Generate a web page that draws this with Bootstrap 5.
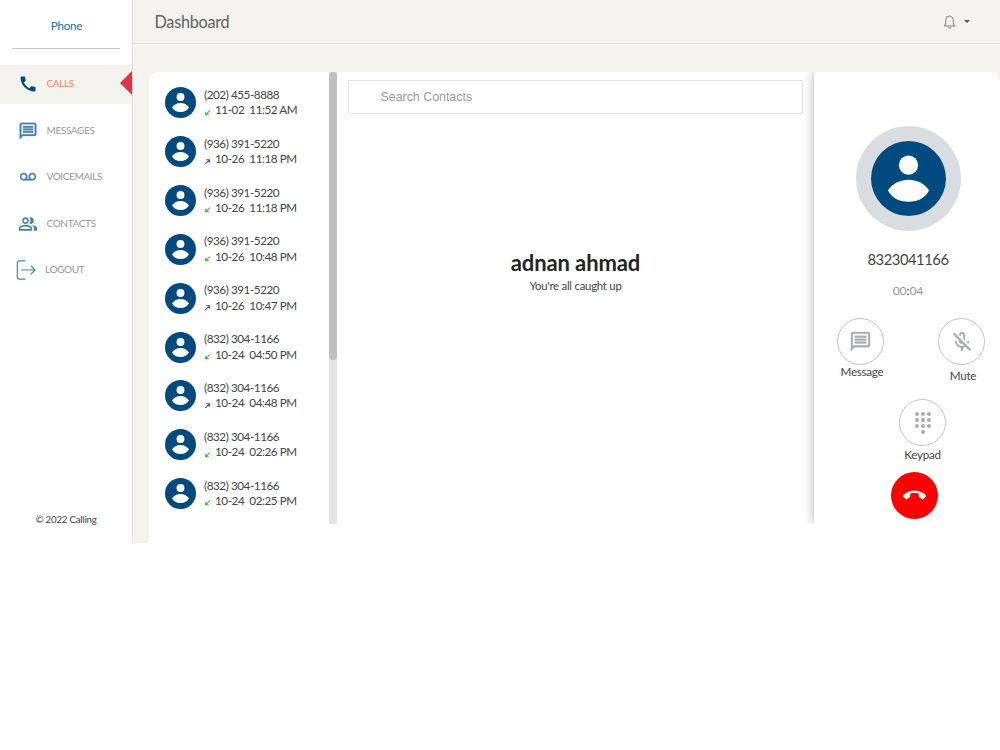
<!DOCTYPE html>
<html lang="en">
<head>
<meta charset="utf-8">
<meta name="viewport" content="width=device-width, initial-scale=1">
<title>Dashboard</title>
<link href="https://cdn.jsdelivr.net/npm/bootstrap@5.3.0/dist/css/bootstrap.min.css" rel="stylesheet">
<style>
body{font-family:Lato,sans-serif;font-size:11.7px;line-height:16px;letter-spacing:-.3px;color:#444;background:#fff}
svg{display:block;flex:none;fill:currentColor}
.app{height:543px}
.side{width:133px;border-right:1px solid #dfdeda;background:#fff}
.brand{height:49px;margin:0 12px 16px;border-bottom:1px solid #ccc9c2;color:#2f6d9f;padding:17px 0 0 1px}
.side-link{height:38.5px;margin-bottom:8px;color:#9a9a9a;font-size:10.1px;letter-spacing:-.42px;padding-left:17.5px;text-decoration:none}
.side-link .word{padding-bottom:2px}
.side-link svg{color:#4682b0}
.side-link .ico{width:20px;margin-right:9px;display:flex;justify-content:center}
.side-link.active{background:#f4f3ef;color:#f38463}
.side-link.active svg{color:#004a80}
.side-link .tri{width:12px;height:24px;margin:0 0 2px auto}
.copy{font-size:9.75px;margin-bottom:16.5px;letter-spacing:-.25px}
.main{background:#f4f3ef}
.top{height:44px;border-bottom:1px solid #dfdeda;padding:0 30px 0 21.5px;color:#66615b}
.top h1{font-size:16.3px;line-height:20px;font-weight:400;padding-top:1px;letter-spacing:-.3px}
.top .caret{border:3.7px solid transparent;border-top-color:#55514c;border-bottom:0}
.panel{margin:28px 0 0 16px;background:#fff;border-radius:9px 9px 0 0;overflow:hidden}
.view{height:452px;overflow:hidden}
.calls{width:180px;padding:6.5px 0 0 16px}
.call{height:48.85px;letter-spacing:-.44px}
.call .txt{line-height:15.6px;margin:0 0 1px 8px}
.call .when{white-space:pre}
.track{width:8px;background:#e4e4e4}
.thumb{height:288px;background:#c1c1c1;border-radius:4px}
.mid{padding:8px 11px 0}
.find{height:34px;border:1px solid #e3e3e3;border-radius:0;padding:0 31.5px;font:12.4px "Liberation Sans",sans-serif;letter-spacing:0}
.find::placeholder{color:#9a9a9a}
.mid h2{font-size:22px;line-height:26px;font-weight:700;color:#252422;margin:136px 0 0;letter-spacing:-.1px}
.mid p{font-size:11.4px;margin-top:2px;letter-spacing:-.25px}
.talk{width:186px;box-shadow:0 0 11px rgba(0,0,0,.32);border-radius:0 8px 0 0;padding-top:54px}
.halo{width:105px;height:105px;background:#d9dde1;margin:0 auto;position:relative;left:1px}
.num{font-size:14.75px;line-height:20px;margin:17.500px 0 0 2px;letter-spacing:-.45px}
.time{font-size:12.3px;margin:14.5px 0 0 2px;color:#999;letter-spacing:-.2px}
.time b{color:#333;font-weight:400}
.disc{width:47px;height:47px;border:1px solid #c4c4c4;color:#aaadb0;background:#fff}
.lab{line-height:12px;padding-left:3px}
.pair{margin:19px 15px 0 23px}
.keys{margin:18px 0 0 31px}
.end{width:47px;height:47px;background:#f00;color:#fff;margin:10px 0 0 77px}
</style>
</head>
<body>
<svg class="d-none">
  <symbol id="person" viewBox="0 0 32 32"><circle cx="16" cy="16" r="16" fill="#004a80"/><circle cx="16" cy="10.300" r="4.100" fill="#fff"/><path fill="#fff" d="M7.200 21C9.500 17.900 12.600 16.500 16 16.500s6.500 1.400 8.800 4.500C23.400 24 20.200 25.900 16 25.900S8.600 24 7.200 21z"/></symbol>
  <symbol id="chat" viewBox="0 0 24 24"><path d="M4 4h16v12H5.170L4 17.170V4m0-2c-1.100 0-2 .9-2 2v18l4-4h14c1.100 0 2-.9 2-2V4c0-1.100-.9-2-2-2H4zm2 10h12v2H6zM6 9h12v2H6zM6 6h12v2H6z" stroke="currentColor" stroke-width=".3"/></symbol>
  <symbol id="in" viewBox="0 0 8 8"><path fill="none" stroke="#3fae49" stroke-width="1.200" d="M6.700 1.800 2.300 6.200M2 3v3.500h3.500"/></symbol>
  <symbol id="out" viewBox="0 0 8 8"><path fill="none" stroke="#4a4af0" stroke-width="1.200" d="M1.500 6.700 5.900 2.300M2.600 2h3.600v3.500"/></symbol>
</svg>
<div class="app d-flex">
  <nav class="side d-flex flex-column flex-shrink-0">
    <div class="brand text-center">Phone</div>
    <a class="side-link active d-flex align-items-center"><span class="ico"><svg width="20" height="20" viewBox="0 0 24 24"><path d="M20.010 15.380c-1.230 0-2.420-.2-3.530-.56-.35-.12-.74-.03-1.010.24l-1.570 1.970c-2.830-1.350-5.480-3.900-6.890-6.830l1.950-1.660c.27-.28.35-.67.24-1.020-.37-1.110-.56-2.300-.56-3.530 0-.54-.45-.99-.99-.99H4.190C3.650 3 3 3.240 3 3.990 3 13.280 10.730 21 20.010 21c.71 0 .99-.63.99-1.180v-3.450c0-.54-.45-.99-.99-.99z"/></svg></span><span class="word">CALLS</span><svg class="tri" viewBox="0 0 12 24"><path fill="#dc3545" d="M12 0v24L0 12z"/></svg></a>
    <a class="side-link d-flex align-items-center"><span class="ico"><svg width="20" height="20"><use href="#chat"/></svg></span><span class="word">MESSAGES</span></a>
    <a class="side-link d-flex align-items-center"><span class="ico"><svg width="16" height="16" viewBox="0 0 24 24"><path d="M18.500 6C15.460 6 13 8.460 13 11.500c0 1.330.47 2.550 1.260 3.500H9.740c.79-.95 1.260-2.170 1.260-3.500C11 8.460 8.540 6 5.500 6S0 8.460 0 11.500 2.460 17 5.500 17h13c3.040 0 5.500-2.460 5.500-5.500S21.540 6 18.500 6zm-13 9C3.570 15 2 13.430 2 11.500S3.570 8 5.500 8 9 9.570 9 11.500 7.430 15 5.500 15zm13 0c-1.930 0-3.500-1.570-3.500-3.500S16.570 8 18.500 8 22 9.570 22 11.500 20.430 15 18.500 15z" stroke="currentColor" stroke-width=".8"/></svg></span><span class="word">VOICEMAILS</span></a>
    <a class="side-link d-flex align-items-center"><span class="ico"><svg width="20" height="20" viewBox="0 0 24 24"><path d="M16.670 13.130C18.040 14.060 19 15.320 19 17v3h4v-3c0-2.180-3.570-3.470-6.330-3.870zM15 12c2.210 0 4-1.790 4-4s-1.790-4-4-4c-.47 0-.91.1-1.330.24C14.500 5.270 15 6.580 15 8s-.5 2.730-1.330 3.760c.42.14.86.24 1.330.24zM9 12c2.210 0 4-1.790 4-4s-1.790-4-4-4-4 1.790-4 4 1.790 4 4 4zm0-6c1.100 0 2 .9 2 2s-.9 2-2 2-2-.9-2-2 .9-2 2-2zM9 13c-2.670 0-8 1.340-8 4v3h16v-3c0-2.660-5.330-4-8-4zm6 5H3v-.99C3.200 16.290 6.300 15 9 15s5.800 1.280 6 2v1z"/></svg></span><span class="word">CONTACTS</span></a>
    <a class="side-link d-flex align-items-center ps-3"><span class="ico"><svg width="20" height="20" viewBox="0 0 20 20"><path fill="none" stroke="currentColor" stroke-width="1.200" stroke-linecap="round" stroke-linejoin="round" d="M9 .8H3.500Q1.300.8 1.300 3v14q0 2.200 2.200 2.200H9M5.500 10h13.500M15.300 6.200l3.700 3.800-3.700 3.800"/></svg></span><span class="word">LOGOUT</span></a>
    <div class="copy text-center mt-auto">© 2022 Calling</div>
  </nav>
  <main class="main flex-grow-1 d-flex flex-column">
    <header class="top d-flex align-items-center flex-shrink-0">
      <h1 class="mb-0 me-auto">Dashboard</h1>
      <svg width="13" height="14" viewBox="0 0 13 14"><path fill="none" stroke="#807b75" d="M1 11c1.500-1.200 1.800-2.200 1.800-5.500C2.800 2.500 4.200 1.100 6.500 1.100s3.700 1.400 3.700 4.400c0 3.300.3 4.300 1.800 5.500zM5 12.600q1.500 1 3 0"/></svg>
      <span class="caret ms-2"></span>
    </header>
    <section class="panel flex-grow-1">
      <div class="view d-flex">
        <div class="calls flex-shrink-0" id="calls"></div>
        <div class="track flex-shrink-0"><div class="thumb"></div></div>
        <div class="mid flex-grow-1 text-center">
          <input class="find form-control" placeholder="Search Contacts">
          <h2>adnan ahmad</h2>
          <p class="mb-0">You're all caught up</p>
        </div>
        <aside class="talk flex-shrink-0 text-center bg-white">
          <div class="halo rounded-circle d-flex align-items-center justify-content-center"><svg width="75" height="75"><use href="#person"/></svg></div>
          <div class="num">8323041166</div>
          <div class="time">00<b>:</b>04</div>
          <div class="pair d-flex justify-content-between">
            <div class="d-flex flex-column align-items-center"><span class="disc rounded-circle d-flex align-items-center justify-content-center"><svg width="23" height="23"><use href="#chat"/></svg></span><span class="lab">Message</span></div>
            <div class="d-flex flex-column align-items-center"><span class="disc rounded-circle d-flex align-items-center justify-content-center"><svg width="24" height="24" viewBox="0 0 24 24"><path d="M10.800 4.900c0-.66.54-1.200 1.200-1.200s1.200.54 1.200 1.200l-.01 3.910L15 10.600V5c0-1.660-1.340-3-3-3-1.540 0-2.790 1.160-2.960 2.650l1.760 1.760V4.900zM19 11h-1.700c0 .58-.1 1.130-.27 1.640l1.270 1.270c.44-.88.7-1.870.7-2.910zM4.410 2.860L3 4.270l6 6V11c0 1.660 1.340 3 3 3 .23 0 .44-.03.65-.08l1.660 1.660c-.71.33-1.500.52-2.310.52-2.760 0-5.300-2.100-5.300-5.100H5c0 3.410 2.720 6.230 6 6.720V21h2v-3.280c.91-.13 1.770-.45 2.550-.9l4.200 4.180 1.410-1.410L4.410 2.860z" stroke="currentColor" stroke-width=".3"/></svg></span><span class="lab pt-1">Mute</span></div>
          </div>
          <div class="keys d-flex flex-column align-items-center"><span class="disc rounded-circle d-flex align-items-center justify-content-center"><svg width="24" height="24" viewBox="0 0 24 24"><path d="M12 19a2 2 0 1 0 0 4 2 2 0 0 0 0-4zM6 1a2 2 0 1 0 0 4 2 2 0 0 0 0-4zm0 6a2 2 0 1 0 0 4 2 2 0 0 0 0-4zm0 6a2 2 0 1 0 0 4 2 2 0 0 0 0-4zM18 1a2 2 0 1 0 0 4 2 2 0 0 0 0-4zm0 6a2 2 0 1 0 0 4 2 2 0 0 0 0-4zm0 6a2 2 0 1 0 0 4 2 2 0 0 0 0-4zM12 1a2 2 0 1 0 0 4 2 2 0 0 0 0-4zm0 6a2 2 0 1 0 0 4 2 2 0 0 0 0-4zm0 6a2 2 0 1 0 0 4 2 2 0 0 0 0-4z"/></svg></span><span>Keypad</span></div>
          <div class="end rounded-circle d-flex align-items-center justify-content-center"><svg width="23" height="23" viewBox="0 0 24 24"><path d="M12 9c-1.600 0-3.150.25-4.600.72v3.100c0 .39-.23.74-.56.9-.98.49-1.870 1.120-2.660 1.850-.18.18-.43.28-.7.28-.28 0-.53-.11-.71-.29L.29 13.080c-.18-.17-.29-.42-.29-.7 0-.28.11-.53.29-.71C3.340 8.780 7.460 7 12 7s8.660 1.780 11.710 4.670c.18.18.29.43.29.71 0 .28-.11.53-.29.71l-2.480 2.480c-.18.18-.43.29-.71.29-.27 0-.52-.11-.7-.28-.79-.74-1.690-1.360-2.670-1.850-.33-.16-.56-.5-.56-.9v-3.100C15.150 9.250 13.600 9 12 9z" stroke="#fff" stroke-width=".3"/></svg></div>
        </aside>
      </div>
    </section>
  </main>
</div>
<script src="https://cdn.jsdelivr.net/npm/bootstrap@5.3.0/dist/js/bootstrap.bundle.min.js"></script>
<script>
const calls = [
  ['(202) 455-8888', 'in', '11-02', '11:52 AM'],
  ['(936) 391-5220', 'out', '10-26', '11:18 PM'],
  ['(936) 391-5220', 'in', '10-26', '11:18 PM'],
  ['(936) 391-5220', 'in', '10-26', '10:48 PM'],
  ['(936) 391-5220', 'out', '10-26', '10:47 PM'],
  ['(832) 304-1166', 'in', '10-24', '04:50 PM'],
  ['(832) 304-1166', 'out', '10-24', '04:48 PM'],
  ['(832) 304-1166', 'in', '10-24', '02:26 PM'],
  ['(832) 304-1166', 'in', '10-24', '02:25 PM']
];
document.getElementById('calls').innerHTML = calls.map(([n, dir, day, time]) =>
  `<div class="call d-flex align-items-center"><svg width="31" height="31"><use href="#person"/></svg><div class="txt"><div>${n}</div><div class="d-flex align-items-center"><svg class="mt-1 me-1" width="7" height="7"><use href="#${dir}"/></svg><span class="when">${day}  ${time}</span></div></div></div>`).join('');
</script>
</body>
</html>
